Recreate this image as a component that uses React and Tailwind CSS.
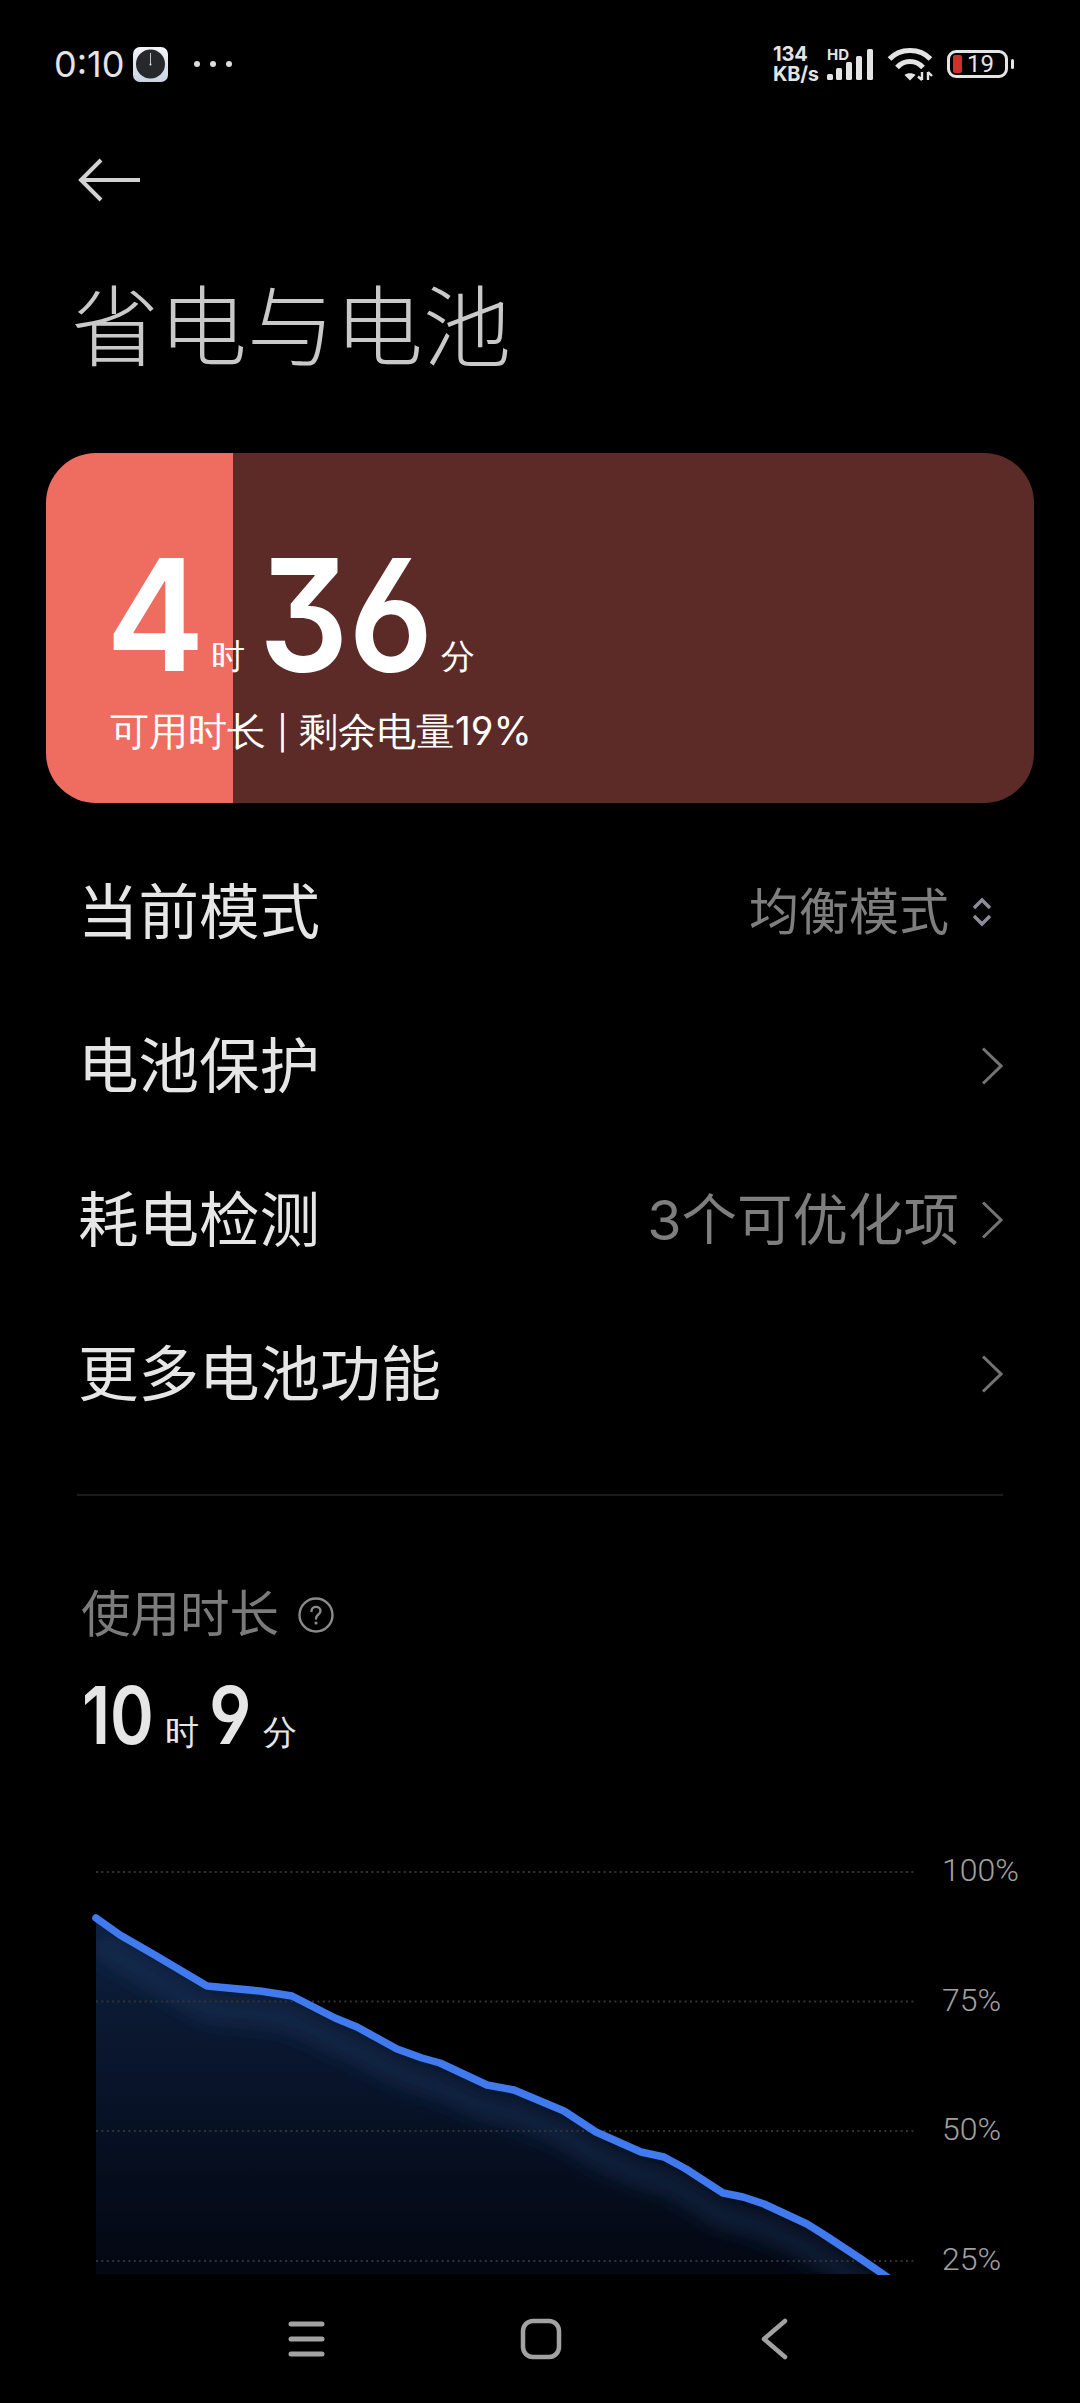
const digitFont = "font-['Inter'] [font-feature-settings:'cv03','cv04','cv09']";

const line = [
    [96, 1919], [120, 1936], [153, 1955], [207, 1987], [260, 1992], [292, 1997], [335, 2019],
    [357, 2028], [397, 2050], [422, 2059], [440, 2064], [487, 2086], [514, 2091], [564, 2112],
    [596, 2133], [641, 2153], [664, 2158], [686, 2170], [723, 2194], [743, 2198], [764, 2205],
    [807, 2225], [823, 2235], [861, 2260], [890, 2280],
];
const linePts = line.map((p) => p.join(",")).join(" ");
const areaPts = `${linePts} 890,2275 96,2275`;
const grid = [1873, 2002.5, 2132, 2262];

function StatusBar() {
    return (
        <div className="h-[128px] shrink-0 flex items-center pl-[54px] pr-[66px]">
            <span className="text-[36px] leading-none text-[#e4e4e4] w-[79px]">0:10</span>
            <svg width="35" height="35" viewBox="0 0 35 35">
                <defs>
                    <linearGradient id="clockBg" x1="0" y1="0" x2="0" y2="1">
                        <stop offset="0" stopColor="#f4f6f9" />
                        <stop offset="1" stopColor="#c9d3e4" />
                    </linearGradient>
                </defs>
                <rect width="35" height="35" rx="7" fill="url(#clockBg)" />
                <circle cx="17.5" cy="17" r="14.5" fill="#26282c" />
                <line x1="17.5" y1="6" x2="17.5" y2="17" stroke="#e8e8e8" strokeWidth="0.8" />
                <circle cx="17.5" cy="17.5" r="1" fill="#e8e8e8" />
            </svg>
            <div className="ml-[26px] flex gap-[10px]">
                <span className="w-[6px] h-[6px] rounded-full bg-[#dcdcdc]" />
                <span className="w-[6px] h-[6px] rounded-full bg-[#dcdcdc]" />
                <span className="w-[6px] h-[6px] rounded-full bg-[#dcdcdc]" />
            </div>
            <div className="ml-auto flex items-center">
                <div className="w-[54px] flex flex-col text-[20px] leading-[20px] font-bold text-[#e4e4e4] -mt-[1px] tracking-[-0.2px]">
                    <span>134</span>
                    <span>KB/s</span>
                </div>
                <div className="relative w-[48px] h-[32px] mt-[1px]">
                    <span className="absolute left-0 -top-[2px] text-[15px] leading-[15px] font-bold text-[#e4e4e4]">HD</span>
                    <svg className="absolute left-0 top-0" width="48" height="32" viewBox="0 0 48 32" fill="#e4e4e4">
                        <rect x="0" y="25" width="6" height="6" rx="1.5" />
                        <rect x="9" y="19" width="6" height="12" rx="1.5" />
                        <rect x="19" y="13" width="6" height="18" rx="1.5" />
                        <rect x="29" y="7" width="6" height="24" rx="1.5" />
                        <rect x="40" y="0" width="6" height="31" rx="1.5" />
                    </svg>
                </div>
                <svg className="ml-[12px]" width="46" height="34" viewBox="0 0 46 34" fill="none" stroke="#e4e4e4" strokeWidth="5">
                    <path d="M2.5 12 C13 0.5 33 0.5 43.5 12" />
                    <path d="M10 20.5 C17 12.5 29 12.5 36 20.5" />
                    <path d="M17.5 28 C20 25.5 26 25.5 28.5 28 L23 33.5 Z" fill="#e4e4e4" stroke="none" />
                    <path d="M35 25 V33 M31 29.5 L35 33 M41 25 V33 M41 25 L45 29" strokeWidth="2.4" />
                </svg>
                <div className="ml-[14px] relative w-[61px] h-[28px] rounded-[9px] border-[3px] border-[#e4e4e4] flex items-center pl-[3px]">
                    <span className="w-[9px] h-[18px] rounded-[2px] bg-[#d1302a]" />
                    <span className="ml-[5px] text-[24px] leading-none text-[#e4e4e4] font-['Roboto']">19</span>
                </div>
                <span className="ml-[3px] w-[3px] h-[10px] rounded-full bg-[#e4e4e4]" />
            </div>
        </div>
    );
}

function Row({ label, value, icon = "chevron", valueClass = "text-[50px]" }) {
    return (
        <div className="h-[154px] flex items-center pl-[32px]">
            <span className="text-[60.5px] leading-none text-[#e6e6e6]">{label}</span>
            <div className="ml-auto flex items-center">
                {value && <span className={`leading-none text-[#7e7e7e] ${valueClass}`}>{value}</span>}
                {icon === "updown" ? (
                    <svg className="ml-[22px] mr-[10px]" width="22" height="30" viewBox="0 0 22 30" fill="none" stroke="#8c8c9c" strokeWidth="3.5">
                        <path d="M3 11 L11 3 L19 11" />
                        <path d="M3 19 L11 27 L19 19" />
                    </svg>
                ) : (
                    <svg className="ml-[22px]" width="22" height="38" viewBox="0 0 22 38" fill="none" stroke="#737373" strokeWidth="3">
                        <path d="M2 1.5 L20 19 L2 36.5" />
                    </svg>
                )}
            </div>
        </div>
    );
}

function BatteryChart() {
    return (
        <svg className="shrink-0" width="830" height="416" viewBox="90 1860 830 416">
            <defs>
                <linearGradient id="areaFill" gradientUnits="userSpaceOnUse" x1="0" y1="1920" x2="0" y2="2275">
                    <stop offset="0" stopColor="#0e203e" />
                    <stop offset="0.5" stopColor="#081328" />
                    <stop offset="1" stopColor="#030711" />
                </linearGradient>
                <clipPath id="areaClip">
                    <polygon points={areaPts} />
                </clipPath>
                <filter id="glow" x="-10%" y="-30%" width="120%" height="160%">
                    <feGaussianBlur stdDeviation="11" />
                </filter>
            </defs>
            <polygon points={areaPts} fill="url(#areaFill)" />
            <g clipPath="url(#areaClip)">
                <polyline
                    points={linePts}
                    transform="translate(0 24)"
                    fill="none"
                    stroke="#1d3f70"
                    strokeOpacity="0.55"
                    strokeWidth="16"
                    filter="url(#glow)"
                />
            </g>
            {grid.map((y) => (
                <line key={y} x1="96" x2="914" y1={y} y2={y} stroke="#333333" strokeWidth="2" strokeDasharray="2 3.4" />
            ))}
            <polyline points={linePts} fill="none" stroke="#4179ee" strokeWidth="7.5" strokeLinecap="round" strokeLinejoin="round" />
        </svg>
    );
}

export default function App() {
    return (
        <div className="w-[1080px] h-[2403px] bg-black overflow-hidden flex flex-col font-['Inter','Noto_Sans_CJK_SC',sans-serif]">
            <StatusBar />

            <div className="h-[104px] shrink-0 flex items-center pl-[78px]">
                <svg width="64" height="44" viewBox="0 0 64 44" fill="none" stroke="#d2d2d2" strokeWidth="4">
                    <path d="M23 2 L3 22 L23 42" />
                    <path d="M3 22 H62" />
                </svg>
            </div>

            <h1 className="mt-[51px] ml-[71px] h-[88px] text-[88px] leading-[88px] font-light text-[#c9c9c9] shrink-0">省电与电池</h1>

            <div className="mt-[82px] mx-[46px] h-[350px] shrink-0 rounded-[50px] bg-[linear-gradient(90deg,#ef6c60_187px,#5c2b27_187px)] pl-[64px] pt-[92px] text-white">
                <div className={`flex items-baseline h-[140px] leading-none -ml-[4px] ${digitFont}`}>
                    <span className="inline-block w-[105px] origin-left scale-x-[0.95] text-[156px] leading-[140px] font-semibold">4</span>
                    <span className="text-[34px] font-normal -translate-y-[3px]">时</span>
                    <span className="ml-[14px] inline-block w-[182px] origin-left scale-x-[0.9] text-[156px] leading-[140px] font-semibold">36</span>
                    <span className="text-[34px] font-normal -translate-y-[3px]">分</span>
                </div>
                <div className={`mt-[26px] text-[39px] leading-[40px] ${digitFont}`}>
                    可用时长 <span className="text-[33px]">|</span> 剩余电量19%
                </div>
            </div>

            <div className="mt-[32px] shrink-0 pl-[46px] pr-[77px]">
                <Row label="当前模式" value="均衡模式" icon="updown" />
                <Row label="电池保护" />
                <Row label="耗电检测" value="3个可优化项" valueClass="text-[55.5px]" />
                <Row label="更多电池功能" />
            </div>

            <div className="mt-[43px] mx-[77px] h-[2px] bg-[#1b1b1b] shrink-0" />

            <div className="mt-[89px] ml-[81px] h-[60px] flex items-center gap-[19px] shrink-0">
                <span className="text-[49.5px] leading-none text-[#7b7b7b]">使用时长</span>
                <svg width="36" height="36" viewBox="0 0 36 36" fill="none" stroke="#8a8a8a" strokeWidth="2.4">
                    <circle cx="18" cy="18" r="16.5" />
                    <path d="M13.5 14 C13.5 8.5 22.5 8.5 22.5 14 C22.5 17.5 18 17.5 18 21.5" strokeLinecap="round" />
                    <circle cx="18" cy="26" r="1.6" fill="#8a8a8a" stroke="none" />
                </svg>
            </div>

            <div className={`mt-[30px] ml-[82px] h-[80px] flex items-baseline text-[#e6e6e6] shrink-0 ${digitFont}`}>
                <span className="inline-block w-[83px] origin-left scale-x-[0.83] text-[80px] leading-[80px] font-semibold">10</span>
                <span className="text-[34px]">时</span>
                <span className="ml-[10px] inline-block w-[54px] origin-left scale-x-[0.88] text-[80px] leading-[80px] font-semibold">9</span>
                <span className="text-[34px]">分</span>
            </div>

            <div className="mt-[104px] h-[416px] shrink-0 flex pl-[90px]">
                <BatteryChart />
                <div className="ml-[22px] -mt-[1px] flex flex-col gap-[105.5px] text-[32px] leading-[24px] text-[#a0a0a0] font-['Roboto'] font-light">
                    <span className="h-[24px]">100%</span>
                    <span className="h-[24px]">75%</span>
                    <span className="h-[24px]">50%</span>
                    <span className="h-[24px]">25%</span>
                </div>
            </div>

            <div className="flex-1 relative flex items-center">
                <svg className="ml-[288px]" width="37" height="36" viewBox="0 0 37 36" stroke="#a2a2a2" strokeWidth="5" strokeLinecap="round">
                    <path d="M3 3 H34 M3 18 H34 M3 33 H34" />
                </svg>
                <svg className="ml-[195px]" width="42" height="42" viewBox="0 0 42 42" fill="none" stroke="#a2a2a2" strokeWidth="4.5">
                    <rect x="3" y="3" width="36" height="36" rx="10" />
                </svg>
                <svg className="ml-[198px]" width="28" height="42" viewBox="0 0 28 42" fill="none" stroke="#a2a2a2" strokeWidth="4.5" strokeLinecap="round" strokeLinejoin="round">
                    <path d="M25 3 L4 21 L25 39" />
                </svg>
            </div>
        </div>
    );
}
